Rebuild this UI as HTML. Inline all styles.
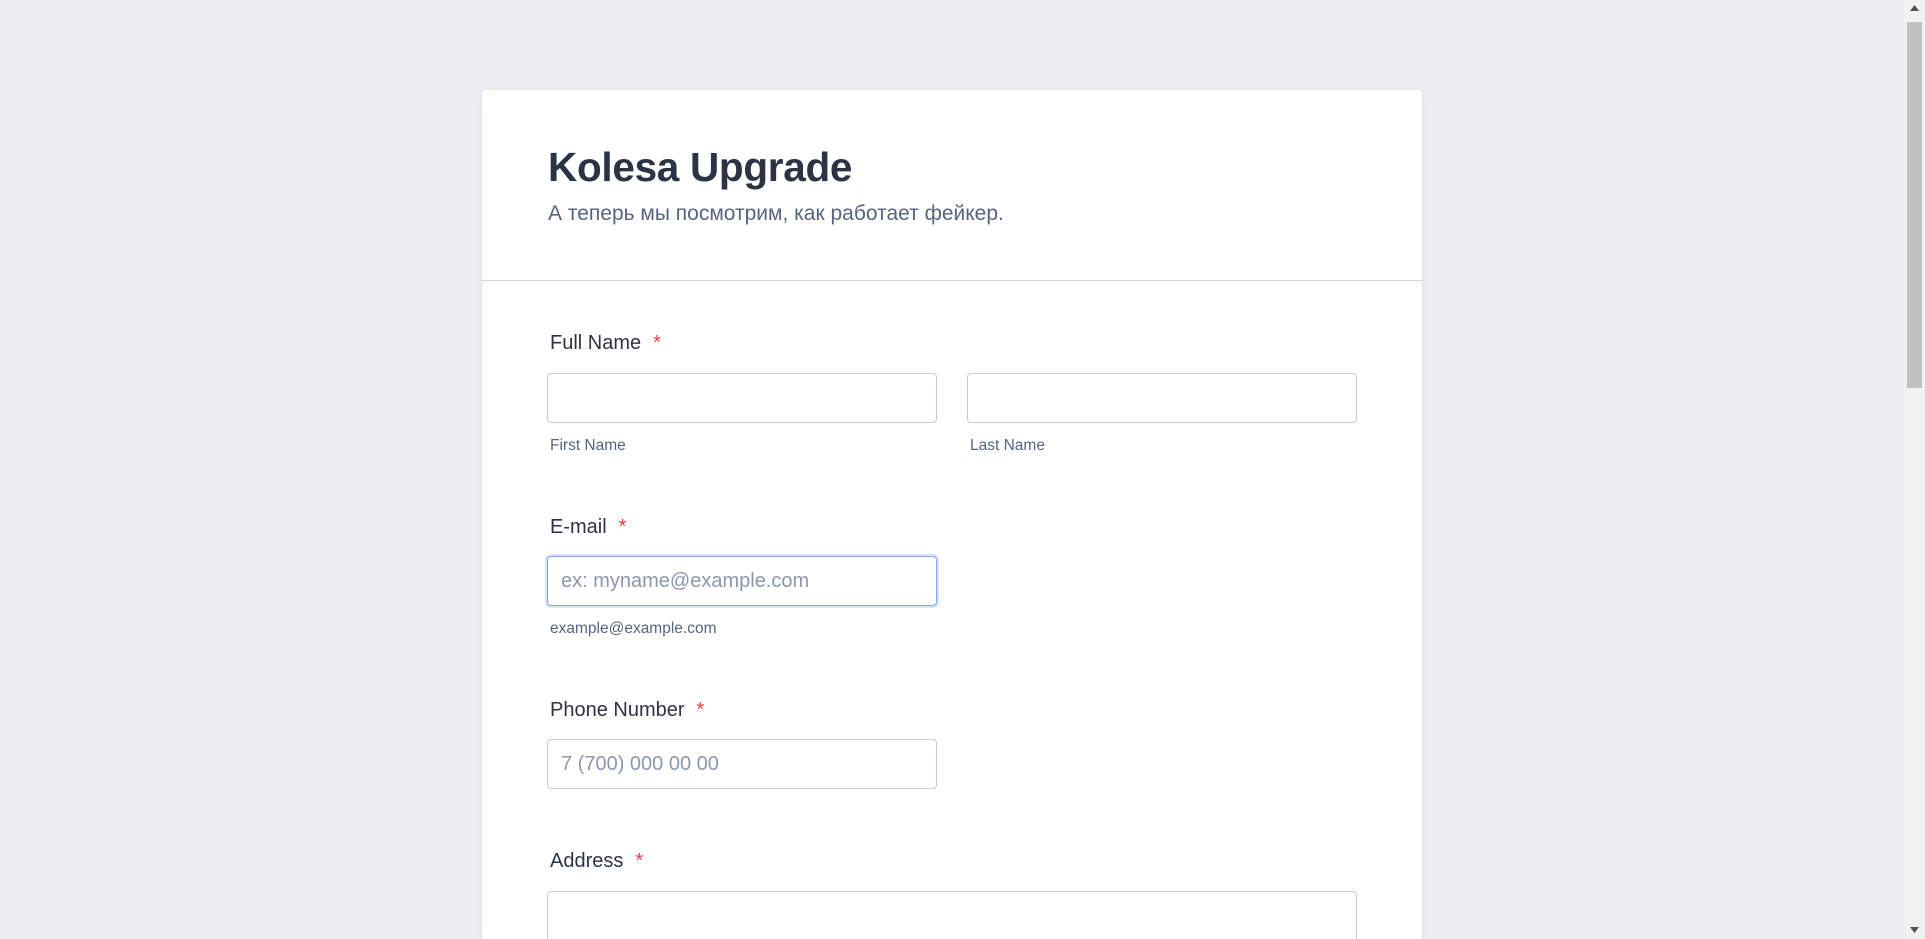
<!DOCTYPE html>
<html><head><meta charset="utf-8"><style>
*{box-sizing:border-box;margin:0;padding:0}
html,body{width:1925px;height:939px;overflow:hidden;background:#ebedf2;font-family:"Liberation Sans",sans-serif;position:relative}
.card{position:absolute;left:482px;top:90px;width:940px;height:849px;background:#fff;border-radius:4px 4px 0 0;box-shadow:0 1px 4px rgba(0,0,0,.08);overflow:hidden}
.abs{position:absolute}
h1{position:absolute;left:66px;top:53px;font-size:40.5px;font-weight:700;color:#2c3345;letter-spacing:-.3px;line-height:48px}
.sub{left:66px;top:112px;font-size:21px;color:#57647e;line-height:24px}
.div{left:0;top:190px;width:940px;height:1px;background:#d3d6df}
.lbl{font-size:20px;color:#2c3345;line-height:24px}
.lbl span{color:#f23a3c;margin-left:12px}
.in{border:1px solid #c3cad8;border-radius:4px;background:#fff;height:50px}
.ph{font-size:20px;color:#8c97ad;line-height:48px;padding-left:13px}
.hint{font-size:15.5px;color:#57647e;line-height:18px}
.focus{border-color:#87a3f0;box-shadow:0 0 0 2px #dbe3fb}
.sb{position:absolute;left:1904px;top:0;width:21px;height:939px;background:#f1f1f1}
.thumb{position:absolute;left:3px;top:22px;width:15px;height:366px;background:#c1c1c1}
</style></head><body>
<div class="card">
<h1>Kolesa Upgrade</h1>
<div class="abs sub">А теперь мы посмотрим, как работает фейкер.</div>
<div class="abs div"></div>
<div class="abs lbl" style="left:68px;top:241px">Full Name<span>*</span></div>
<div class="abs in" style="left:65px;top:283px;width:390px"></div>
<div class="abs in" style="left:485px;top:283px;width:390px"></div>
<div class="abs hint" style="left:68px;top:347px">First Name</div>
<div class="abs hint" style="left:488px;top:347px">Last Name</div>
<div class="abs lbl" style="left:68px;top:425px">E-mail<span>*</span></div>
<div class="abs in focus ph" style="left:65px;top:466px;width:390px">ex: myname@example.com</div>
<div class="abs hint" style="left:68px;top:530px">example@example.com</div>
<div class="abs lbl" style="left:68px;top:608px">Phone Number<span>*</span></div>
<div class="abs in ph" style="left:65px;top:649px;width:390px">7 (700) 000 00 00</div>
<div class="abs lbl" style="left:68px;top:759px">Address<span>*</span></div>
<div class="abs in" style="left:65px;top:801px;width:810px;height:60px"></div>
</div>
<div class="sb"><div class="thumb"></div>
<svg class="abs" style="left:6px;top:5px" width="9" height="6"><path d="M0 6L4.5 0L9 6Z" fill="#505050"/></svg>
<svg class="abs" style="left:6px;top:927px" width="9" height="6"><path d="M0 0L4.5 6L9 0Z" fill="#505050"/></svg>
</div>
</body></html>
